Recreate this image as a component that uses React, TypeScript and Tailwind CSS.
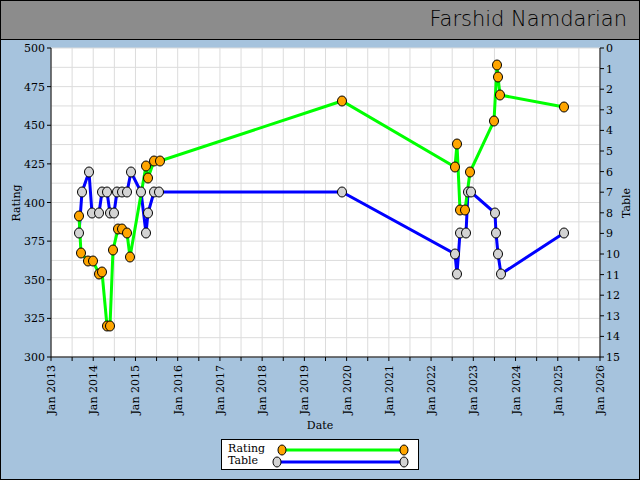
import React from "react";

const X0 = 51, X1 = 600, Y0 = 48, Y1 = 357;
const green: [number, number][] = [[79,216],[81,253],[88,261],[93,261],[99,274],[102,272],[107,326],[110,326],[113,250],[118,229],[122,229],[127,233],[130,257],[146,166],[148,178],[154,161],[160,161],[342,101],[455,167],[457,144],[460,210],[465,210],[470,172],[494,121],[497,65],[498,77],[500,95],[564,107]];
const blue: [number, number][] = [[79,233],[82,192],[89,172],[92,213],[99,213],[102,192],[107,192],[110,213],[114,213],[117,192],[122,192],[127,192],[131,172],[141,192],[146,233],[148,213],[154,192],[159,192],[342,192],[455,254],[457,274],[460,233],[466,233],[468,192],[471,192],[495,213],[496,233],[498,254],[501,274],[564,233]];
const F = "'DejaVu Serif', 'Liberation Serif', serif";

export default function App() {
  const yr = (X1 - X0) / 13;
  const vgrid = Array.from({ length: 27 }, (_, i) => X0 + (i * yr) / 2);
  const hgrid = Array.from({ length: 17 }, (_, i) => Y0 + (i * (Y1 - Y0)) / 16);
  const pts = (a: [number, number][]) => a.map((p) => p.join(",")).join(" ");
  return (
    <div className="w-[640px] h-[480px] bg-[#a6c3dd] border border-black flex flex-col overflow-hidden">
      <div className="h-[39px] bg-[#8c8c8c] border-b border-black flex items-center justify-end pr-[12px] shrink-0">
        <span className="text-[21px] text-black" style={{ fontFamily: "'DejaVu Sans', sans-serif", fontWeight: 300 }}>Farshid Namdarian</span>
      </div>
      <svg width="638" height="399" viewBox="1 40 638 399" className="shrink-0" style={{ fontFamily: F }}>
        <rect x={X0} y={Y0} width={X1 - X0} height={Y1 - Y0} fill="#fff" />
        {vgrid.map((x, i) => <line key={"v" + i} x1={x} x2={x} y1={Y0} y2={Y1} stroke="#dcdcdc" />)}
        {hgrid.map((y, i) => <line key={"h" + i} x1={X0} x2={X1} y1={y} y2={y} stroke="#dcdcdc" />)}
        <line x1={X0} x2={X0} y1={Y0} y2={Y1} stroke="#000" />
        <line x1={X1} x2={X1} y1={Y0} y2={Y1} stroke="#000" />
        <line x1={X0} x2={X1} y1={Y1} y2={Y1} stroke="#000" />
        {Array.from({ length: 9 }, (_, i) => {
          const y = Y0 + (i * (Y1 - Y0)) / 8;
          return (
            <g key={"l" + i}>
              <line x1={X0 - 4} x2={X0} y1={y} y2={y} stroke="#000" />
              <text x={X0 - 6} y={y + 4} fontSize="11" textAnchor="end">{500 - i * 25}</text>
            </g>
          );
        })}
        {Array.from({ length: 16 }, (_, i) => {
          const y = Y0 + (i * (Y1 - Y0)) / 15;
          return (
            <g key={"r" + i}>
              <line x1={X1} x2={X1 + 4} y1={y} y2={y} stroke="#000" />
              <text x={X1 + 6} y={y + 4} fontSize="11">{i}</text>
            </g>
          );
        })}
        {vgrid.map((x, i) => <line key={"t" + i} x1={x} x2={x} y1={Y1} y2={Y1 + 4} stroke="#000" />)}
        {Array.from({ length: 14 }, (_, i) => {
          const x = X0 + i * yr;
          return (
            <text key={"x" + i} x={0} y={0} fontSize="11" textAnchor="end" transform={`translate(${x + 4},${Y1 + 8}) rotate(-90)`}>
              {"Jan " + (2013 + i)}
            </text>
          );
        })}
        <text x={320} y={429} fontSize="11" textAnchor="middle">Date</text>
        <text fontSize="11" textAnchor="middle" transform="translate(20,203) rotate(-90)">Rating</text>
        <text fontSize="11" textAnchor="middle" transform="translate(630,203) rotate(-90)">Table</text>
        <polyline points={pts(blue)} fill="none" stroke="#0000ff" strokeWidth="3" />
        <polyline points={pts(green)} fill="none" stroke="#00ff00" strokeWidth="3" />
        {blue.map(([x, y], i) => <ellipse key={"b" + i} cx={x} cy={y} rx="4.5" ry="5" fill="#d3d3d3" stroke="#000" />)}
        {green.map(([x, y], i) => <ellipse key={"g" + i} cx={x} cy={y} rx="4.5" ry="5" fill="#ffa500" stroke="#000" />)}
      </svg>
      <div className="ml-[220px] w-[198px] h-[31px] bg-white border border-black flex items-center" style={{ fontFamily: F }}>
        <div className="flex flex-col text-[11px] leading-[12px] pl-[6px] w-[50px]">
          <span>Rating</span>
          <span>Table</span>
        </div>
        <svg width="140" height="29">
          <line x1="10" x2="132" y1="10" y2="10" stroke="#00ff00" strokeWidth="3" />
          <ellipse cx="10" cy="10" rx="4" ry="5" fill="#ffa500" stroke="#000" />
          <ellipse cx="132" cy="10" rx="4" ry="5" fill="#ffa500" stroke="#000" />
          <line x1="5" x2="132" y1="22" y2="22" stroke="#0000ff" strokeWidth="3" />
          <ellipse cx="5" cy="22" rx="4" ry="5" fill="#d3d3d3" stroke="#000" />
          <ellipse cx="132" cy="22" rx="4" ry="5" fill="#d3d3d3" stroke="#000" />
        </svg>
      </div>
    </div>
  );
}
